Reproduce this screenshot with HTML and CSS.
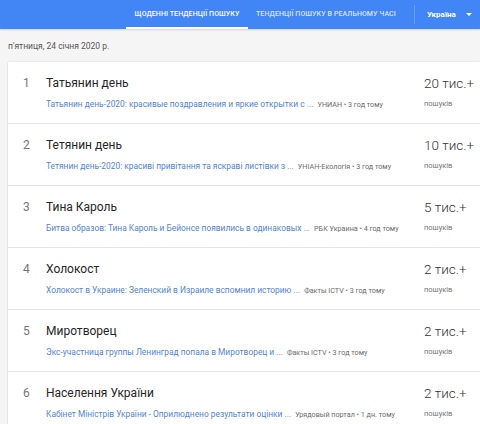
FILE: index.html
```html
<!DOCTYPE html>
<html lang="uk">
<head>
<meta charset="utf-8">
<title>Тенденції пошуку</title>
<link rel="stylesheet" href="styles.css">
</head>
<body>
<header class="topbar">
  <nav class="tabs">
    <a class="tab tab-active">ЩОДЕННІ ТЕНДЕНЦІЇ ПОШУКУ</a>
    <a class="tab">ТЕНДЕНЦІЇ ПОШУКУ В РЕАЛЬНОМУ ЧАСІ</a>
  </nav>
  <div class="divider"></div>
  <div class="geo">Україна <span class="caret"></span></div>
</header>
<main class="page">
  <div class="date">п'ятниця, 24 січня 2020 р.</div>
  <section class="card">
    <div class="row">
      <div class="rank">1</div>
      <div class="details">
        <div class="title">Татьянин день</div>
        <div class="sub"><span class="link">Татьянин день-2020: красивые поздравления и яркие открытки с ...</span><span class="src">УНИАН • 3 год тому</span></div>
      </div>
      <div class="count"><div class="num">20 тис.+</div><div class="lbl">пошуків</div></div>
    </div>
    <div class="row">
      <div class="rank">2</div>
      <div class="details">
        <div class="title">Тетянин день</div>
        <div class="sub"><span class="link">Тетянин день-2020: красиві привітання та яскраві листівки з ...</span><span class="src">УНІАН-Екологія • 3 год тому</span></div>
      </div>
      <div class="count"><div class="num">10 тис.+</div><div class="lbl">пошуків</div></div>
    </div>
    <div class="row">
      <div class="rank">3</div>
      <div class="details">
        <div class="title">Тина Кароль</div>
        <div class="sub"><span class="link">Битва образов: Тина Кароль и Бейонсе появились в одинаковых ...</span><span class="src">РБК Украина • 4 год тому</span></div>
      </div>
      <div class="count"><div class="num">5 тис.+</div><div class="lbl">пошуків</div></div>
    </div>
    <div class="row">
      <div class="rank">4</div>
      <div class="details">
        <div class="title">Холокост</div>
        <div class="sub"><span class="link">Холокост в Украине: Зеленский в Израиле вспомнил историю ...</span><span class="src">Факты ICTV • 3 год тому</span></div>
      </div>
      <div class="count"><div class="num">2 тис.+</div><div class="lbl">пошуків</div></div>
    </div>
    <div class="row">
      <div class="rank">5</div>
      <div class="details">
        <div class="title">Миротворец</div>
        <div class="sub"><span class="link">Экс-участница группы Ленинград попала в Миротворец и ...</span><span class="src">Факты ICTV • 3 год тому</span></div>
      </div>
      <div class="count"><div class="num">2 тис.+</div><div class="lbl">пошуків</div></div>
    </div>
    <div class="row">
      <div class="rank">6</div>
      <div class="details">
        <div class="title">Населення України</div>
        <div class="sub"><span class="link">Кабінет Міністрів України - Оприлюднено результати оцінки ...</span><span class="src">Урядовый портал • 1 дн. тому</span></div>
      </div>
      <div class="count"><div class="num">2 тис.+</div><div class="lbl">пошуків</div></div>
    </div>
  </section>
</main>
</body>
</html>
```
FILE: styles.css
```css
* { box-sizing: border-box; }
html, body { margin: 0; padding: 0; }
body {
  background: #f5f5f5;
  font-family: Roboto, "Liberation Sans", Arial, sans-serif;
  color: #212121;
  overflow: hidden;
}
.topbar {
  height: 29px;
  background: #4285f4;
  display: flex;
  align-items: stretch;
  padding-left: 126px;
  box-shadow: 0 1px 2px rgba(0,0,0,0.15);
}
.tabs { display: flex; align-items: stretch; }
.tab {
  display: flex;
  align-items: center;
  padding: 1px 8px 0 8px;
  font-size: 7px;
  font-weight: 500;
  color: rgba(255,255,255,0.8);
  letter-spacing: 0.1px;
  border-bottom: 2px solid transparent;
}
.tab-active {
  color: #fff;
  border-bottom-color: #fff;
  width: 122px;
  justify-content: center;
}
.divider {
  width: 1px;
  background: rgba(255,255,255,0.2);
  margin: 5px 0 5px 10px;
}
.geo {
  display: flex;
  align-items: center;
  gap: 8px;
  padding-left: 12px;
  color: #fff;
  font-size: 8px;
  font-weight: 700;
}
.caret {
  width: 0; height: 0;
  border-left: 3px solid transparent;
  border-right: 3px solid transparent;
  border-top: 3px solid #fff;
  margin-left: 2px;
}
.page { padding: 0 0 0 8px; }
.date {
  height: 33px;
  display: flex;
  align-items: center;
  font-size: 8.5px;
  color: #555;
  padding-top: 1px;
}
.card {
  background: #fff;
  box-shadow: 0 0 2px rgba(0,0,0,0.12), 0 1px 2px rgba(0,0,0,0.08);
}
.row {
  display: grid;
  grid-template-columns: 38px 1fr 56px;
  height: 62px;
  border-bottom: 1px solid #e4e4e4;
  padding-top: 14px;
}
.rank {
  font-size: 12px;
  color: #757575;
  padding-left: 15px;
  line-height: 14px;
}
.title {
  font-size: 12px;
  line-height: 14px;
  color: #262626;
}
.sub {
  margin-top: 8px;
  line-height: 12px;
  white-space: nowrap;
  display: flex;
  align-items: baseline;
}
.link {
  font-size: 8.4px;
  color: #5383d6;
  margin-right: 4px;
}
.src {
  font-size: 7.2px;
  color: #6b6b6b;
}
.num {
  font-size: 13.5px;
  font-weight: 300;
  line-height: 14px;
  color: #333;
}
.lbl {
  margin-top: 8px;
  line-height: 12px;
  font-size: 7.5px;
  color: #757575;
}
```
